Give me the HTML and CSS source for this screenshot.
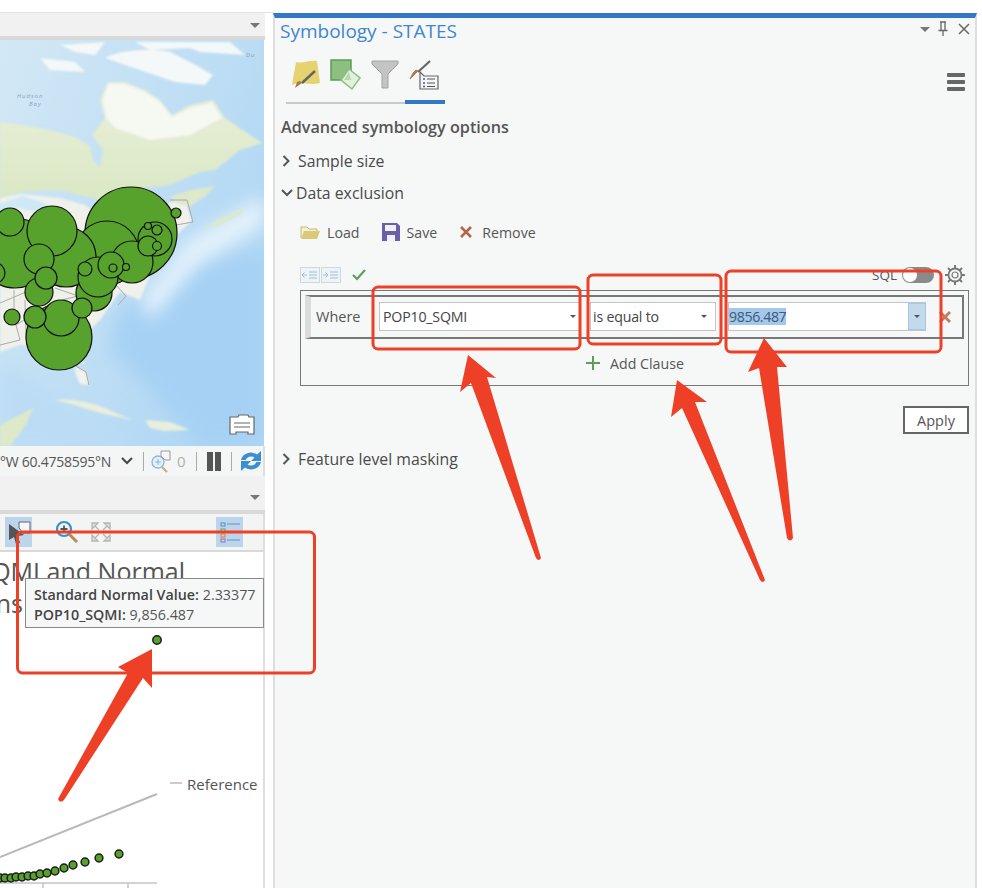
FILE: index.html
```html
<!DOCTYPE html>
<html lang="en">
<head>
    <meta charset="UTF-8">
    <meta name="viewport" content="width=device-width, initial-scale=1.0">
    <title>Symbology - STATES</title>
    <link rel="stylesheet" href="styles.css">
</head>
<body>

<div class="page">
    <div class="left-col">
        <div class="pane-tab"><span class="tab-arrow"></span></div>
        <div class="map-wrap">
            <svg class="map" viewBox="0 40 264 406" width="264" height="406">
                <defs>
                    <linearGradient id="sea" x1="0" y1="0" x2="1" y2="0.6">
                        <stop offset="0" stop-color="#d3e8f5"/>
                        <stop offset="1" stop-color="#b0d7f4"/>
                    </linearGradient>
                    <linearGradient id="land" gradientUnits="userSpaceOnUse" x1="0" y1="80" x2="0" y2="195">
                        <stop offset="0" stop-color="#eaf0dc"/>
                        <stop offset="1" stop-color="#dbe8c5"/>
                    </linearGradient>
                    <filter id="soft" x="-10%" y="-10%" width="120%" height="120%"><feGaussianBlur stdDeviation="1.200"/></filter>
                    <filter id="softer" x="-40%" y="-40%" width="180%" height="180%"><feGaussianBlur stdDeviation="9"/></filter>
                </defs>
                <rect x="0" y="40" width="264" height="406" fill="url(#sea)"/>
                <path d="M120 310 L180 270 L264 250 L264 446 L200 446 L150 390 L110 350Z" fill="#a6d1f4" filter="url(#softer)"/>
                <path d="M0 360 L60 400 L130 446 L0 446Z" fill="#bcdcf5" filter="url(#softer)"/>
                <path d="M140 300 L190 240 L264 195 L264 225 L200 262 L150 320Z" fill="#e6f3fc" filter="url(#softer)"/>
                <g filter="url(#soft)">
                    <path d="M0 122 C25 125 50 129 75 137 L90 146 L93 160 L100 167 L103 150 L92 135 L105 118 L100 100 L108 82 L125 82 L145 90 L160 100 L172 115 L190 105 L213 100 L225 118 L262 143 L240 150 L215 170 L200 172 L170 185 L130 190 L100 200 L60 190 L20 192 L0 198Z" fill="url(#land)"/>
                    <path d="M108 84 L125 84 L145 92 L160 102 L172 117 L190 108 L212 103 L222 118 L190 135 L150 140 L115 128 L106 118 L103 100Z" fill="#f6f8f2"/>
                    <path d="M0 198 L20 194 L60 198 L85 205 L110 222 L160 208 L170 202 L186 202 L192 221 L160 250 L140 300 L120 292 L100 320 L75 345 L85 365 L60 345 L20 345 L0 352Z" fill="#f0f1ea"/>
                    <path d="M0 204 L22 196 L48 204 L38 212 L18 208 L0 212Z" fill="#cfe8f6"/>
                    <path d="M170 197 L190 190 L215 186 L205 196 L190 206 L178 204Z M203 229 L222 218 L246 207 L240 214 L222 224Z" fill="#dde9c8"/>
                    <path d="M105 58 C120 50 150 48 170 52 L190 62 L213 75 L205 85 L175 82 L140 70Z M40 58 L75 62 L85 72 L50 70Z M135 42 L230 42 L245 55 L200 52 L190 48 L150 50Z M60 45 L105 42 L95 55 L75 52Z" fill="#f5f8f8"/>
                    <path d="M74 366 L86 372 L89 385 L80 384 L76 375Z" fill="#f3f3ec"/>
                    <path d="M55 400 C70 398 90 402 105 408 L132 420 L100 413 L75 405Z M145 420 L170 422 L190 430 L165 431 L150 428Z" fill="#e9efdc"/>
                    <path d="M0 446 L0 425 L33 408 L26 425 L10 446Z" fill="#dde9c8"/>
                </g>
                <g class="borders">
                    <path d="M170 200 L187 200 L193 222 L176 225 M0 303 L26 292 M0 345 L20 340 L16 325 L24 320 M14 312 L14 290 M25 300 L26 340 M55 288 L78 296 L62 300 M116 285 L126 296 L118 305 M76 366 L86 372 L89 385"/>
                </g>
                <text class="map-label" x="17" y="98">Hudson</text>
                <text class="map-label" x="29" y="106">Bay</text>
                <text class="map-label" x="246" y="57">Du</text>
                <g class="states">
                    <circle cx="131" cy="233" r="46"/>
                    <circle cx="107" cy="253" r="32"/>
                    <circle cx="59" cy="337" r="33"/>
                    <circle cx="15" cy="253" r="35"/>
                    <circle cx="66" cy="257" r="30"/>
                    <circle cx="52" cy="231" r="25"/>
                    <circle cx="94" cy="293" r="18"/>
                    <circle cx="132" cy="262" r="21"/>
                    <circle cx="98" cy="277" r="20"/>
                    <circle cx="155" cy="239" r="17"/>
                    <circle cx="61" cy="318" r="18"/>
                    <circle cx="39" cy="292" r="14"/>
                    <circle cx="39" cy="259" r="15"/>
                    <circle cx="10" cy="222" r="14"/>
                    <circle cx="111" cy="265" r="13"/>
                    <circle cx="46" cy="278" r="11"/>
                    <circle cx="35" cy="317" r="11"/>
                    <circle cx="82" cy="308" r="10"/>
                    <circle cx="148" cy="246" r="10"/>
                    <circle cx="-5" cy="273" r="10"/>
                    <circle cx="12" cy="317" r="8"/>
                    <circle cx="85" cy="269" r="7"/>
                    <circle cx="176" cy="213" r="5"/>
                    <circle cx="157" cy="230" r="5"/>
                    <circle cx="157" cy="246" r="4.5"/>
                    <circle cx="113" cy="268" r="4"/>
                    <circle cx="126" cy="267" r="3.5"/>
                    <circle cx="148" cy="226" r="3.5"/>
                </g>
            </svg>
            <svg class="bookmark" viewBox="0 0 26 22" width="26" height="22">
                <path d="M1 3 H9 L10 1 H19 L20 3 H25 V20 H19 V18 H7 V20 H1Z" fill="#fff" stroke="#666" stroke-width="1.2"/>
                <path d="M5 9 H21 M5 13 H21" stroke="#666" stroke-width="1.2"/>
            </svg>
        </div>
        <div class="status-bar">
            <span class="coords">°W 60.4758595°N</span>
            <svg class="chevron" viewBox="0 0 12 8" width="12" height="8"><path d="M1 1 L6 6 L11 1" fill="none" stroke="#444" stroke-width="2"/></svg>
            <span class="sep"></span>
            <svg viewBox="0 0 22 24" width="22" height="24">
                <circle cx="8" cy="13" r="6" fill="#e8f1f9" stroke="#8ab8df" stroke-width="1.3"/>
                <path d="M5 13 H11 M8 10 V16" stroke="#8ab8df" stroke-width="1.1"/>
                <path d="M12 18 L17 23" stroke="#c8aa78" stroke-width="2"/>
                <path d="M11 2 H20 V11 H15 L11 7Z" fill="#f6f6f6" stroke="#9a9a9a"/>
            </svg>
            <span class="count">0</span>
            <span class="sep"></span>
            <span class="pause"><i></i><i></i></span>
            <span class="sep last"></span>
            <svg viewBox="0 0 22 22" width="22" height="22">
                <path d="M1 10 A10 9 0 0 1 17 4.500 L21 1 V11 H11 L14.500 7.500 A6 5.500 0 0 0 5.500 10Z" fill="#3d8dd3"/>
                <path d="M21 12 A10 9 0 0 1 5 17.500 L1 21 V11 H11 L7.500 14.500 A6 5.500 0 0 0 16.500 12Z" fill="#3d8dd3"/>
            </svg>
        </div>
        <div class="pane-tab second"><span class="tab-arrow"></span></div>
        <div class="chart-toolbar">
            <span class="tool-btn on first">
                <svg viewBox="0 0 26 26" width="26" height="26">
                    <path d="M13 3 H24 V14 H17 L13 9Z" fill="#f4f6f7" stroke="#666"/>
                    <path d="M3 5 L18 16 L12 17 L14 24 L10 25 L8 18 L3 21Z" fill="#555"/>
                </svg>
            </span>
            <svg class="zoom-icon" viewBox="0 0 24 24" width="24" height="24">
                <circle cx="9" cy="9" r="7" fill="#eef5fb" stroke="#3b8ed6" stroke-width="2.2"/>
                <path d="M5.500 9 H12.500 M9 5.500 V12.500" stroke="#555" stroke-width="1.800"/>
                <path d="M14 14 L22 22" stroke="#b58b52" stroke-width="3"/>
            </svg>
            <svg class="expand-icon" viewBox="0 0 22 22" width="22" height="22">
                <path d="M2 8 V2 H8 Z M14 2 H20 V8 Z M2 14 V20 H8 Z M20 14 V20 H14 Z M5 5 L9 9 M17 5 L13 9 M5 17 L9 13 M17 17 L13 13" fill="#ddd" stroke="#b5b5b5" stroke-width="1.300"/>
            </svg>
            <span class="tool-btn on last">
                <svg viewBox="0 0 26 26" width="26" height="26">
                    <rect x="4" y="4" width="4" height="3" fill="none" stroke="#4a90d9"/>
                    <rect x="4" y="10" width="4" height="3" fill="none" stroke="#6aa84f"/>
                    <rect x="4" y="15" width="4" height="3" fill="none" stroke="#d9823b"/>
                    <rect x="4" y="20" width="4" height="3" fill="none" stroke="#9a6fc0"/>
                    <path d="M10 5 H23 M10 13 H23 M10 21 H23" stroke="#5a94c8" stroke-width="1.200"/>
                </svg>
            </span>
        </div>
        <div class="chart">
            <svg viewBox="0 552 264 336" width="264" height="336">
                <text class="chart-title" x="185" y="581" text-anchor="end">QMI and Normal</text>
                <text class="chart-title" x="23" y="613" text-anchor="end">ns</text>
                <path d="M0 857 L157 794" stroke="#b9b9b9" stroke-width="2"/>
                <path d="M170 783 H182" stroke="#b9b9b9" stroke-width="1.500"/>
                <text class="legend" x="187" y="790">Reference</text>
                <path d="M0 883 H157 M43 883 V888 M128 883 V888" stroke="#c4c4c4" stroke-width="1.500" fill="none"/>
                <g class="dots">
                    <circle cx="157" cy="640" r="4.200"/>
                    <circle cx="0" cy="878" r="3.900"/>
                    <circle cx="5" cy="878" r="3.900"/>
                    <circle cx="11" cy="878" r="3.900"/>
                    <circle cx="16" cy="877" r="3.900"/>
                    <circle cx="22" cy="877" r="3.900"/>
                    <circle cx="28" cy="876" r="3.900"/>
                    <circle cx="34" cy="876" r="3.900"/>
                    <circle cx="40" cy="874" r="3.900"/>
                    <circle cx="47" cy="873" r="3.900"/>
                    <circle cx="55" cy="871" r="3.900"/>
                    <circle cx="64" cy="868" r="3.900"/>
                    <circle cx="73" cy="865" r="3.900"/>
                    <circle cx="85" cy="862" r="3.900"/>
                    <circle cx="99" cy="858" r="3.900"/>
                    <circle cx="119" cy="854" r="3.900"/>
                </g>
            </svg>
            <div class="tooltip">
                <div><b>Standard Normal Value:</b> 2.33377</div>
                <div><b>POP10_SQMI:</b> 9,856.487</div>
            </div>
        </div>
    </div>

    <div class="panel">
        <div class="panel-head">
            <h1>Symbology - STATES</h1>
            <div class="win-btns">
                <span class="tab-arrow"></span>
                <svg viewBox="0 0 12 16" width="12" height="16"><path d="M3 1 H9 M4 1 V9 M8 1 V9 M1.500 9.500 H10.500 M6 10 V15" fill="none" stroke="#666" stroke-width="1.300"/></svg>
                <svg viewBox="0 0 12 12" width="12" height="12"><path d="M1 1 L11 11 M11 1 L1 11" stroke="#666" stroke-width="1.500"/></svg>
            </div>
        </div>

        <div class="tabs">
            <div class="tab-icons">
                <span class="tab-icon">
                    <svg viewBox="0 0 30 30" width="30" height="30">
                        <path d="M5 3 C11 5 18 1 26 2 L29 24 C20 27 10 22 1 26Z" fill="#e5d36f"/>
                        <path d="M24 12 L11 24" stroke="#666" stroke-width="2.500"/>
                        <path d="M11 24 L4 29 L6 23 L9 22Z" fill="#a87a4a"/>
                    </svg>
                </span>
                <span class="tab-icon">
                    <svg viewBox="0 0 32 32" width="32" height="32">
                        <rect x="1" y="1" width="20" height="20" fill="#8cbf80" stroke="#5d9a5a" stroke-width="1.500"/>
                        <path d="M19 10 L30 19 L22 30 L11 21Z" fill="#e4f0de" stroke="#8cbf80" stroke-width="1.500"/>
                        <path d="M19 13 L21 21 L14 21Z" fill="#b6d8ac"/>
                    </svg>
                </span>
                <span class="tab-icon">
                    <svg viewBox="0 0 28 30" width="28" height="30">
                        <path d="M1 2 H27 V5 L17 15 V29 H11 V15 L1 5Z" fill="#c4c4c4" stroke="#a2a2a2"/>
                    </svg>
                </span>
                <span class="tab-icon current">
                    <svg viewBox="0 0 32 32" width="32" height="32">
                        <path d="M22 2 L10 13" stroke="#666" stroke-width="2.200"/>
                        <path d="M10 12 L2 20 L5 14 L8 11Z" fill="#b07d4a" stroke="#b07d4a"/>
                        <path d="M12 13 L16 17 H30 V30 H12Z" fill="#f5f6f6" stroke="#666" stroke-width="1.200"/>
                        <path d="M19 20 H27 M19 24 H27 M19 27.500 H27" stroke="#555"/>
                        <path d="M15 20 H17 M15 24 H17 M15 27.500 H17" stroke="#5b4fa8" stroke-width="1.500"/>
                    </svg>
                </span>
            </div>
            <div class="hamburger"><i></i><i></i><i></i></div>
        </div>

        <h2>Advanced symbology options</h2>
        <div class="section closed">
            <svg viewBox="0 0 8 12" width="8" height="12"><path d="M1.500 1 L6.500 6 L1.500 11" fill="none" stroke="#555" stroke-width="2"/></svg>
            Sample size
        </div>
        <div class="section open">
            <svg viewBox="0 0 12 8" width="12" height="8"><path d="M1 1 L6 6 L11 1" fill="none" stroke="#555" stroke-width="2"/></svg>
            Data exclusion
        </div>

        <div class="actions">
            <span class="action load">
                <svg viewBox="0 0 20 16" width="20" height="16">
                    <path d="M1 14 V3 H7 L9 5 H17 V7" fill="#f4f0d8" stroke="#c9b86a"/>
                    <path d="M1 15 L4 7 H20 L17 15Z" fill="#dcc978"/>
                </svg>
                Load
            </span>
            <span class="action save">
                <svg viewBox="0 0 18 18" width="18" height="18">
                    <path d="M0 0 H15 L18 3 V18 H0Z" fill="#6a5fa8"/>
                    <rect x="3" y="2" width="11" height="6" fill="#f1f0f6"/>
                    <rect x="5" y="12" width="8" height="6" fill="#f1f0f6"/>
                </svg>
                Save
            </span>
            <span class="action remove">
                <svg viewBox="0 0 12 12" width="12" height="12"><path d="M1 1 L11 11 M11 1 L1 11" stroke="#b3664a" stroke-width="2.600"/></svg>
                Remove
            </span>
        </div>

        <div class="query-tools">
            <span class="indent-btn">
                <svg viewBox="0 0 20 16" width="20" height="16"><path d="M9 5 H17 M9 8 H17 M9 11 H17 M7 8 H2 M4.500 5.500 L2 8 L4.500 10.500" fill="none" stroke="#9cc0de"/></svg>
            </span>
            <span class="indent-btn">
                <svg viewBox="0 0 20 16" width="20" height="16"><path d="M9 5 H17 M9 8 H17 M9 11 H17 M2 8 H7 M4.500 5.500 L7 8 L4.500 10.500" fill="none" stroke="#9cc0de"/></svg>
            </span>
            <svg class="check" viewBox="0 0 14 12" width="14" height="12"><path d="M1 6 L5 10 L13 1" fill="none" stroke="#5d9e5c" stroke-width="2.200"/></svg>
            <span class="sql">SQL</span>
            <span class="toggle"><i></i></span>
            <svg class="gear" viewBox="0 0 20 20" width="20" height="20">
                <circle cx="10" cy="10" r="6.500" fill="none" stroke="#777" stroke-width="1.800"/>
                <circle cx="10" cy="10" r="3" fill="none" stroke="#777" stroke-width="1.200"/>
                <path d="M10 0 V4 M10 16 V20 M0 10 H4 M16 10 H20 M3 3 L5.500 5.500 M17 3 L14.500 5.500 M3 17 L5.500 14.500 M17 17 L14.500 14.500" stroke="#777" stroke-width="2"/>
            </svg>
        </div>

        <div class="query-box">
            <div class="clause">
                <span class="where">Where</span>
                <div class="combo field"><span>POP10_SQMI</span><span class="caret"></span></div>
                <div class="combo oper"><span>is equal to</span><span class="caret"></span></div>
                <div class="combo value">
                    <span class="selected">9856.487</span>
                    <span class="drop"><span class="caret"></span></span>
                </div>
                <svg class="clause-x" viewBox="0 0 12 12" width="12" height="12"><path d="M1 1 L11 11 M11 1 L1 11" stroke="#c4795c" stroke-width="2.800"/></svg>
            </div>
            <div class="add-clause">
                <svg viewBox="0 0 16 16" width="16" height="16"><path d="M8 1 V15 M1 8 H15" stroke="#5d9e5c" stroke-width="2"/></svg>
                Add Clause
            </div>
        </div>

        <div class="apply-row"><button type="button">Apply</button></div>

        <div class="section closed masking">
            <svg viewBox="0 0 8 12" width="8" height="12"><path d="M1.500 1 L6.500 6 L1.500 11" fill="none" stroke="#555" stroke-width="2"/></svg>
            Feature level masking
        </div>
    </div>
</div>

<!-- red markup drawn over the screenshot -->
<svg class="markup" viewBox="0 0 982 888" width="982" height="888">
    <rect x="373" y="287" width="207" height="62" rx="5"/>
    <rect x="588" y="275" width="133" height="69" rx="5"/>
    <rect x="726" y="271" width="215" height="81" rx="5"/>
    <rect x="17.500" y="532" width="297" height="141" rx="5"/>
    <path class="arrow" d="M468 355 L496 378 L487 377 L541 558 Q539 562 536 558 L471 383 L460 392Z"/>
    <path class="arrow" d="M677 380 L707 402 L695 402 L765 580 Q763 584 760 580 L682 408 L671 417Z"/>
    <path class="arrow" d="M764 338 L787 367 L777 367 L793 538 Q790 543 787 538 L759 368 L748 372Z"/>
    <path class="arrow" d="M152 649 L152 688 L143 678 L64 800 Q60 804 58 799 L128 673 L118 667Z"/>
</svg>

</body>
</html>
```

FILE: styles.css
```css
/* Reset and basic styles */
* {
    box-sizing: border-box;
    margin: 0;
    padding: 0;
}

body {
    font-family: 'Open Sans', 'Noto Sans', sans-serif;
    background: #fff;
    color: #4d4d4d;
    width: 982px;
    height: 888px;
    overflow: hidden;
    position: relative;
}

svg {
    display: block;
    flex: none;
}

.page {
    display: flex;
    height: 888px;
    padding-top: 12px;
    padding-right: 5px;
    border-bottom: none;
}

/* left column */
.left-col {
    width: 273px;
    display: flex;
    flex-direction: column;
    border-top: 1px solid #e3e3e3;
}

.pane-tab {
    height: 27px;
    background: #f1f1f1;
    display: flex;
    justify-content: flex-end;
    align-items: center;
    padding-right: 5px;
    padding-top: 2px;
    border-bottom: 4px solid #d9d9d9;
    width: 265px;
    flex: none;
}

.pane-tab.second {
    height: 38px;
    padding-top: 8px;
    border-bottom: 4px solid #d9d9d9;
}

.tab-arrow {
    display: block;
    width: 0;
    height: 0;
    border-left: 5px solid transparent;
    border-right: 5px solid transparent;
    border-top: 5px solid #777;
}

.map-wrap {
    position: relative;
    width: 264px;
    height: 406px;
    flex: none;
}

.map {
    background: #cde5f6;
}

.map-label {
    font-size: 6px;
    font-style: italic;
    letter-spacing: 1px;
    fill: #8ba3b8;
}

.borders path {
    fill: none;
    stroke: #aaa;
    stroke-width: 1;
}

.states circle {
    fill: #56a22c;
    stroke: #111;
    stroke-width: 1.200;
}

.bookmark {
    position: absolute;
    left: 229px;
    top: 374px;
}

.status-bar {
    width: 265px;
    height: 30px;
    flex: none;
    background: #f4f5f5;
    border-right: 2px solid #dedede;
    display: flex;
    align-items: center;
    overflow: hidden;
    color: #555;
    font-size: 14px;
}

.coords {
    width: 110px;
    flex: none;
    white-space: nowrap;
    letter-spacing: -0.25px;
}

.chevron {
    margin-left: 11px;
}

.status-bar .sep {
    width: 1px;
    height: 19px;
    background: #aaa;
    margin: 0 6px 0 10px;
    flex: none;
}

.status-bar .sep.last {
    margin-left: 10px;
    margin-right: 8px;
}

.count {
    color: #b0b0b0;
    margin-left: 5px;
    margin-right: 0;
    font-size: 15px;
}

.pause {
    display: flex;
    gap: 2px;
    margin-left: 4px;
}

.pause i {
    display: block;
    width: 6px;
    height: 19px;
    background: #555;
}

.chart-toolbar {
    width: 265px;
    height: 38px;
    flex: none;
    background: #f3f4f4;
    border-right: 2px solid #dedede;
    border-bottom: 2px solid #d9d9d9;
    display: flex;
    align-items: center;
    padding-left: 5px;
}

.tool-btn {
    width: 27px;
    height: 30px;
    display: flex;
    align-items: center;
    justify-content: center;
    flex: none;
}

.tool-btn.on {
    background: #bcd5ea;
}

.zoom-icon {
    margin-left: 23px;
}

.expand-icon {
    margin-left: 11px;
}

.tool-btn.last {
    margin-left: auto;
    margin-right: 20px;
}

.chart {
    position: relative;
    width: 265px;
    flex: 1;
    background: #fff;
    border-right: 2px solid #dedede;
    overflow: visible;
}

.chart-title {
    font-size: 25px;
    fill: #555;
}

.legend {
    font-size: 15px;
    fill: #555;
}

.dots circle {
    fill: #56a22c;
    stroke: #1c1c1c;
    stroke-width: 1.500;
}

.tooltip {
    position: absolute;
    left: 25px;
    top: 26px;
    width: 239px;
    height: 50px;
    padding: 6px 0 0 8px;
    background: #f6f8f8;
    border: 1.500px solid #8a8a8a;
    font-size: 14.300px;
    line-height: 20px;
    color: #555;
    white-space: nowrap;
}

.tooltip b {
    font-weight: 600;
    color: #444;
}

/* symbology pane */
.panel {
    flex: 1;
    background: #f6f8f8;
    border-top: 5px solid #3377c9;
    border-left: 2px solid #dedede;
    border-right: 2px solid #dedede;
    margin-top: 1px;
    padding: 0 6px 0 5px;
}

.panel-head {
    display: flex;
    justify-content: space-between;
    align-items: center;
    height: 25px;
}

h1 {
    font-size: 19px;
    font-weight: 400;
    color: #3f85d1;
}

.win-btns {
    display: flex;
    align-items: center;
    gap: 9px;
    margin-right: -1px;
    padding-bottom: 3px;
}

.win-btns .tab-arrow {
    margin-right: -2px;
}

.tabs {
    display: flex;
    justify-content: space-between;
    align-items: flex-start;
    height: 57px;
    margin-top: 4px;
    padding-right: 4px;
}

.tab-icons {
    display: flex;
    align-items: flex-start;
    width: 159px;
    height: 57px;
    margin-left: 6px;
    padding-top: 12px;
    border-bottom: 2px solid #c9c9c9;
    gap: 9px;
    position: relative;
}

.tab-icon {
    display: block;
}

.tab-icon:first-child {
    margin-left: 5px;
}

.tab-icon.current::after {
    content: '';
    position: absolute;
    left: 119px;
    bottom: -2px;
    width: 40px;
    height: 4px;
    background: #3377c9;
}

.hamburger {
    margin-top: 26px;
    display: flex;
    flex-direction: column;
    gap: 3px;
    width: 18px;
}

.hamburger i {
    display: block;
    height: 4px;
    border-radius: 1px;
    background: #666;
}

h2 {
    font-size: 16.200px;
    font-weight: 600;
    color: #555;
    margin-top: 11px;
    margin-left: 1px;
    line-height: 24px;
}

.section {
    display: flex;
    align-items: center;
    height: 32px;
    font-size: 15.800px;
    font-weight: 400;
    color: #4a4a4a;
    gap: 8px;
    padding-left: 2px;
}

.section.closed {
    margin-top: 6px;
}

.section.open {
    gap: 3px;
    padding-left: 1px;
    margin-top: 0;
}

.actions {
    display: flex;
    align-items: center;
    height: 24px;
    margin-top: 11px;
    padding-left: 20px;
    font-size: 14.200px;
    color: #555;
}

.action {
    display: flex;
    align-items: center;
    gap: 7px;
}

.save {
    margin-left: 22px;
}

.remove {
    margin-left: 23px;
    gap: 10px;
}

.query-tools {
    display: flex;
    align-items: center;
    height: 22px;
    margin-top: 20px;
    padding-left: 20px;
    padding-right: 4px;
}

.indent-btn {
    width: 20px;
    height: 16px;
    background: #eef3f7;
    border: 1px solid #cfd8df;
    margin-right: 1px;
}

.indent-btn svg {
    margin: -1px;
}

.check {
    margin-left: 10px;
}

.sql {
    margin-left: auto;
    font-size: 13.500px;
    color: #555;
}

.toggle {
    display: block;
    width: 32px;
    height: 16px;
    border-radius: 8px;
    background: #8a8a8a;
    margin: 0 11px 0 5px;
    position: relative;
}

.toggle i {
    position: absolute;
    left: 1px;
    top: 1px;
    width: 14px;
    height: 14px;
    border-radius: 50%;
    background: #fff;
}

.query-box {
    margin-left: 20px;
    margin-right: 0;
    margin-top: 4px;
    height: 96px;
    border: 1.500px solid #777;
    padding: 3.500px 4px 0;
}

.clause {
    height: 44px;
    border: 2px solid #777;
    border-left: 6px solid #dcdcdc;
    outline: none;
    display: flex;
    align-items: center;
    font-size: 14.500px;
    color: #555;
}

.where {
    width: 68px;
    padding-left: 5px;
    flex: none;
}

.combo {
    height: 29px;
    background: #fff;
    border: 1px solid #c4c4c4;
    display: flex;
    align-items: center;
    justify-content: space-between;
    color: #444;
    flex: none;
    font-size: 14.200px;
    letter-spacing: -0.2px;
}

.field {
    width: 202px;
    padding: 0 4px 0 3px;
}

.oper {
    width: 126px;
    margin-left: 9px;
    padding: 0 8px 0 2px;
}

.value {
    width: 198px;
    margin-left: 12px;
    border-right: none;
}

.selected {
    background: #a3c8ea;
    line-height: 17px;
    color: #3a5a78;
    letter-spacing: -0.4px;
}

.drop {
    width: 18px;
    height: 27px;
    background: #c3d9ec;
    border: 1px solid #a3c8ea;
    display: flex;
    align-items: center;
    justify-content: center;
}

.caret {
    display: block;
    width: 0;
    height: 0;
    border-left: 3px solid transparent;
    border-right: 3px solid transparent;
    border-top: 3px solid #555;
}

.clause-x {
    margin-left: 13px;
}

.add-clause {
    display: flex;
    align-items: center;
    justify-content: center;
    gap: 9px;
    height: 46px;
    padding-top: 3px;
    font-size: 14.200px;
    color: #555;
}

.apply-row {
    display: flex;
    justify-content: flex-end;
    margin-top: 20px;
}

button {
    width: 66px;
    height: 28px;
    background: #fff;
    border: 2px solid #666;
    font-family: inherit;
    font-size: 14.500px;
    color: #555;
}

.section.masking {
    margin-top: 9px;
}

/* red annotations */
.markup {
    position: absolute;
    left: 0;
    top: 0;
    pointer-events: none;
}

.markup rect {
    fill: none;
    stroke: #ee4026;
    stroke-width: 3;
}

.markup .arrow {
    fill: #ee4026;
}
```
